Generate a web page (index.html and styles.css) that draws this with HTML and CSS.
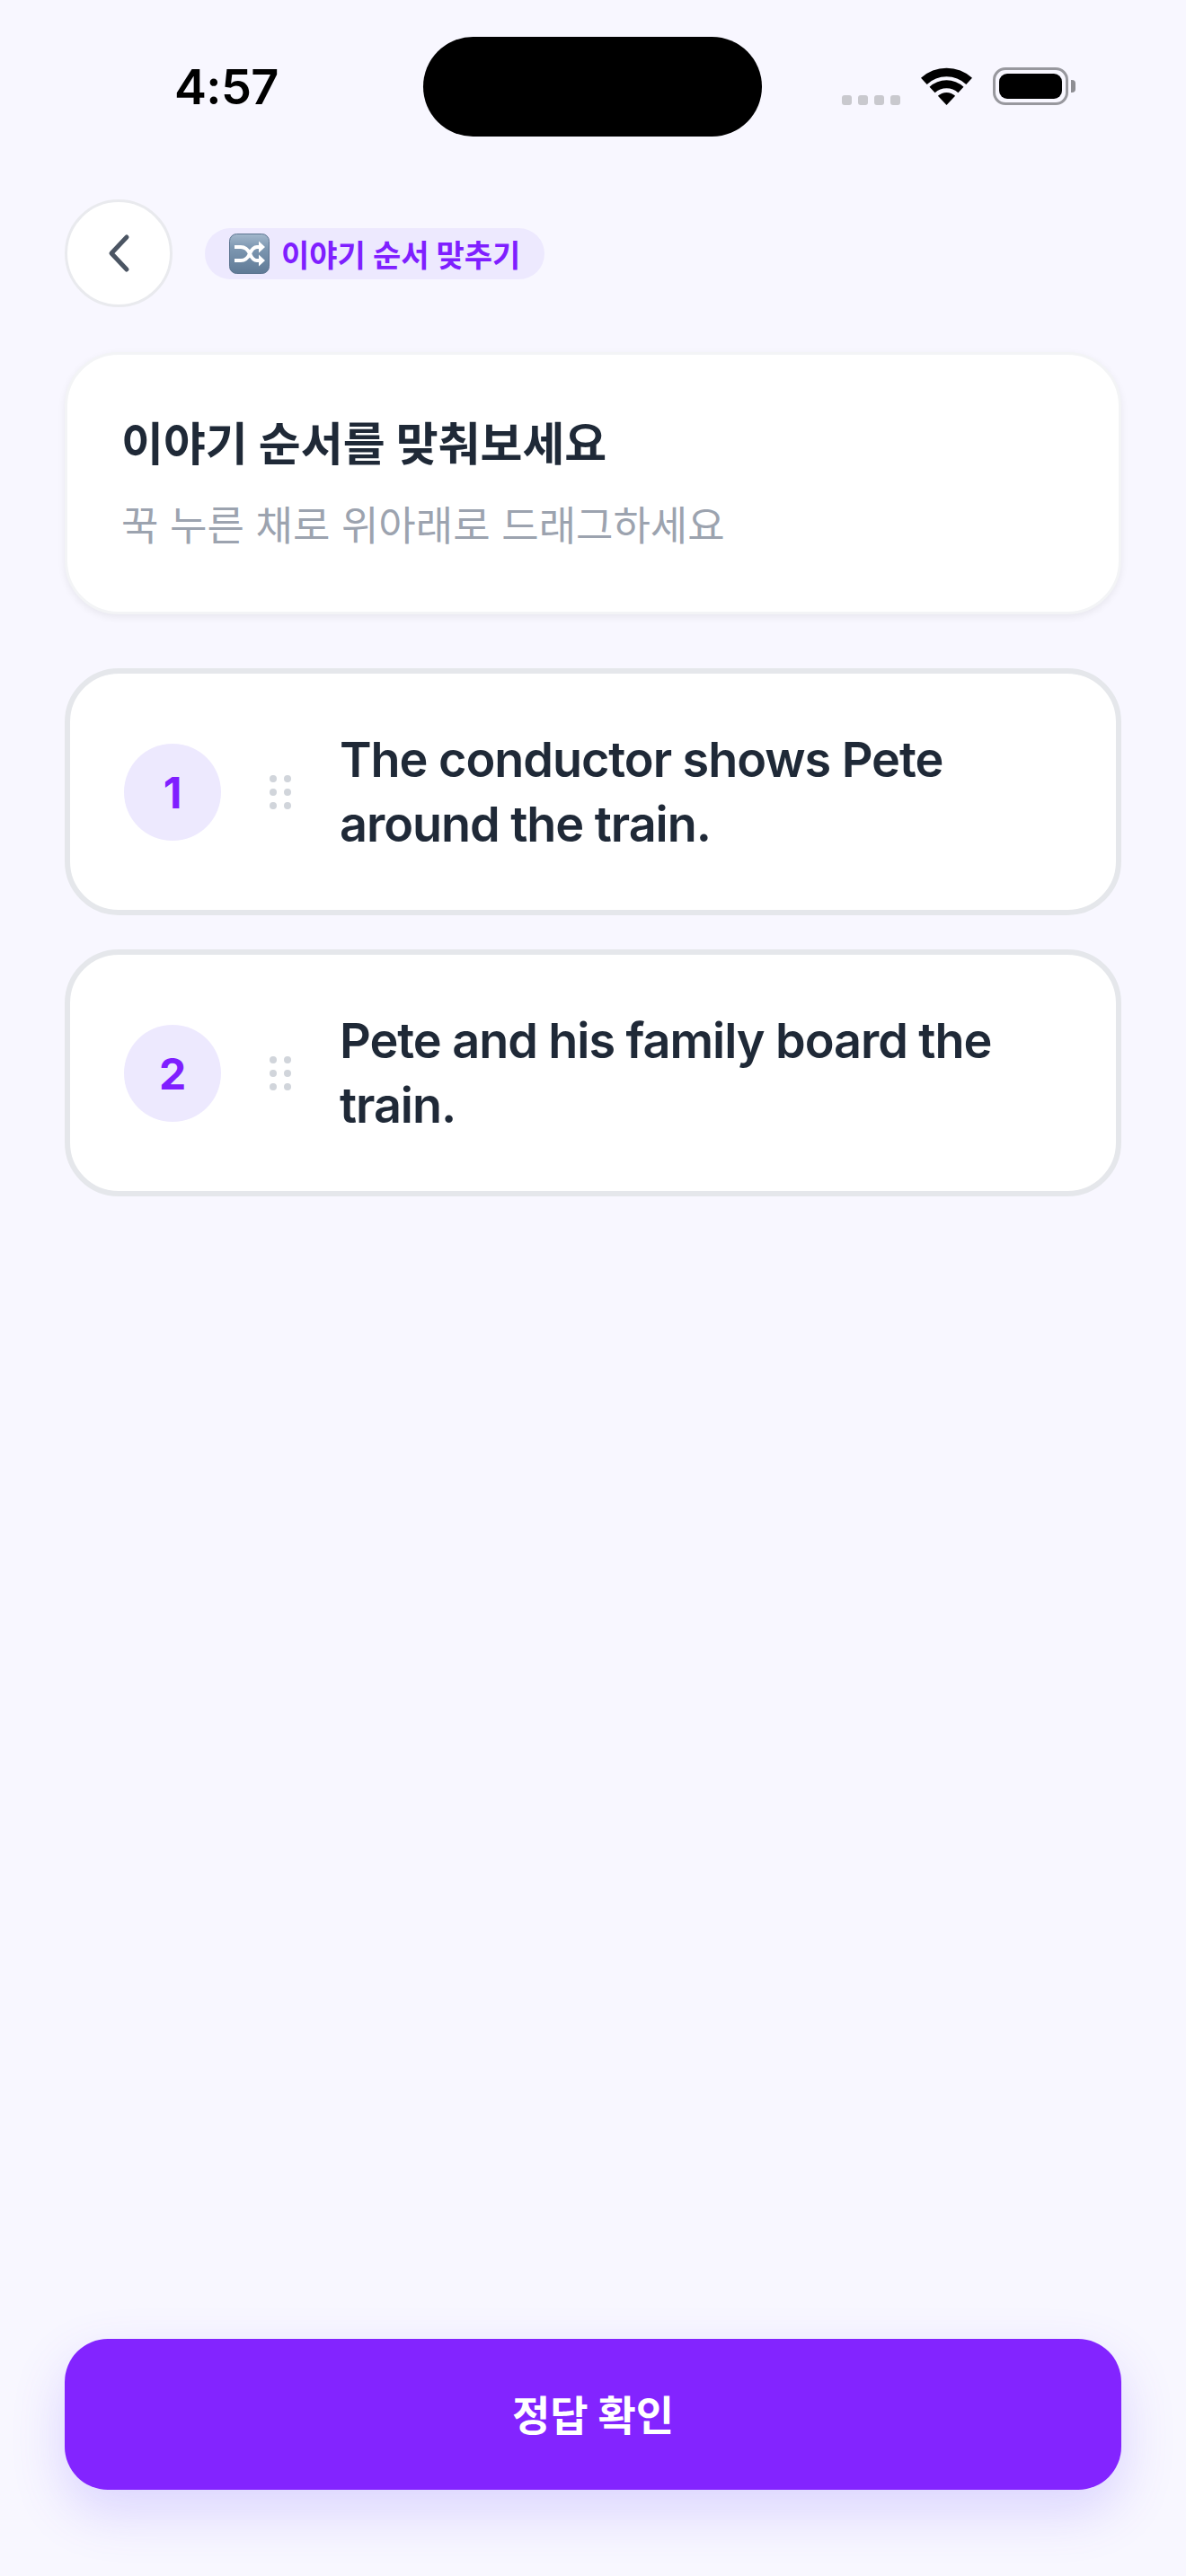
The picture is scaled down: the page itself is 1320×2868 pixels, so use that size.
FILE: index.html
```html
<!DOCTYPE html>
<html lang="ko">
<head>
<meta charset="UTF-8">
<title>이야기 순서 맞추기</title>
<link rel="stylesheet" href="styles.css">
</head>
<body>
<div class="page">
    <div class="status">
        <div class="time">4:57</div>
        <div class="island"></div>
        <div class="status-icons">
            <div class="signal"><i></i><i></i><i></i><i></i></div>
            <svg class="wifi" width="57" height="42" viewBox="0 0 57 42">
                <path d="M0 11.8A42 42 0 0 1 57 11.8L50.3 18.9A32 32 0 0 0 6.7 18.9Z"/>
                <path d="M9.5 21.8A28 28 0 0 1 47.5 21.8L41.4 28.3A19 19 0 0 0 15.6 28.3Z"/>
                <path d="M18.9 31.8A14 14 0 0 1 38.1 31.8L28.5 42Z"/>
            </svg>
            <div class="battery"><div class="battery-fill"></div></div>
            <div class="battery-cap"></div>
        </div>
    </div>

    <div class="top">
        <div class="back">
            <svg width="28" height="46" viewBox="0 0 28 46">
                <path d="M23 5L6 23L23 41" fill="none" stroke="#4b5563" stroke-width="5" stroke-linecap="round" stroke-linejoin="round"/>
            </svg>
        </div>
        <div class="pill">
            <svg class="shuffle" width="45" height="45" viewBox="0 0 45 45">
                <defs>
                    <linearGradient id="tile" x1="0" y1="0" x2="0" y2="1">
                        <stop offset="0" stop-color="#a3b8cc"/>
                        <stop offset="0.35" stop-color="#7d97b1"/>
                        <stop offset="1" stop-color="#5f7a96"/>
                    </linearGradient>
                </defs>
                <rect x="0.5" y="0.5" width="44" height="44" rx="8" fill="url(#tile)" stroke="#5d7590"/>
                <path d="M6 15H13C18 15 21 18 23 22.500C25 27 27 30 31 30H34M6 30H13C18 30 21 27 23 22.500C25 18 27 15 31 15H34" fill="none" stroke="#fff" stroke-width="4"/>
                <path d="M33 8.500L40 15L33 21.500ZM33 23.500L40 30L33 36.500Z" fill="#fff"/>
            </svg>
            <span>이야기 순서 맞추기</span>
        </div>
    </div>

    <div class="intro">
        <h1>이야기 순서를 맞춰보세요</h1>
        <p>꾹 누른 채로 위아래로 드래그하세요</p>
    </div>

    <div class="list">
        <div class="item">
            <div class="num">1</div>
            <div class="grip"><i></i><i></i><i></i><i></i><i></i><i></i></div>
            <div class="sentence">The conductor shows Pete around the train.</div>
        </div>
        <div class="item">
            <div class="num">2</div>
            <div class="grip"><i></i><i></i><i></i><i></i><i></i><i></i></div>
            <div class="sentence">Pete and his family board the train.</div>
        </div>
    </div>

    <div class="submit">정답 확인</div>
</div>
</body>
</html>
```

FILE: styles.css
```css
html, body {
    margin: 0;
    padding: 0;
}
body {
    background: #f8f7ff;
    font-family: Inter, "Noto Sans CJK KR", sans-serif;
    color: #1f2937;
}
.page {
    display: flex;
    flex-direction: column;
    box-sizing: border-box;
    height: 2868px;
    padding: 0 72px 96px;
}

/* status bar */
.status {
    display: flex;
    align-items: flex-start;
    height: 222px;
    margin: 0 -72px;
    padding-top: 41px;
    box-sizing: border-box;
}
.time {
    width: 277px;
    padding-left: 194px;
    margin-top: 29px;
    font-size: 54px;
    line-height: 54px;
    font-weight: 600;
    letter-spacing: -0.6px;
    color: #000;
}
.island {
    width: 377px;
    height: 111px;
    border-radius: 56px;
    background: #000;
}
.status-icons {
    display: flex;
    align-items: flex-start;
    margin-left: 89px;
    margin-top: 34px;
}
.signal {
    display: flex;
    gap: 7px;
    margin-top: 31px;
    margin-right: 23px;
}
.signal i {
    width: 11px;
    height: 11px;
    border-radius: 3px;
    background: #c9c9ce;
}
.wifi {
    display: block;
    margin-right: 23px;
}
.battery {
    box-sizing: border-box;
    width: 84px;
    height: 42px;
    padding: 4px;
    border: 3px solid #98989e;
    border-radius: 14px;
}
.battery-fill {
    height: 100%;
    border-radius: 9px;
    background: #000;
}
.battery-cap {
    width: 5px;
    height: 14px;
    margin: 14px 0 0 3px;
    border-radius: 0 4px 4px 0;
    background: #8e8e93;
}

/* top row */
.top {
    display: flex;
    align-items: center;
    height: 120px;
}
.back {
    display: flex;
    align-items: center;
    justify-content: center;
    box-sizing: border-box;
    width: 120px;
    height: 120px;
    border: 3px solid #e9eaee;
    border-radius: 50%;
    background: #fff;
}
.pill {
    display: flex;
    align-items: center;
    gap: 13px;
    box-sizing: border-box;
    height: 57px;
    margin-left: 36px;
    padding: 0 27px;
    border-radius: 29px;
    background: #ede9fe;
    color: #7f1fff;
    font-size: 34px;
    font-weight: 700;
}
.shuffle {
    flex: none;
}

/* instruction card */
.intro {
    box-sizing: border-box;
    height: 292px;
    margin-top: 50px;
    padding: 64px 60px 0;
    border: 3px solid #f3f4f6;
    border-radius: 60px;
    background: #fff;
    box-shadow: 0 3px 9px rgba(0, 0, 0, 0.07);
}
.intro h1 {
    margin: 0;
    font-size: 51px;
    line-height: 72px;
    font-weight: 700;
}
.intro p {
    margin: 22px 0 0;
    font-size: 45px;
    line-height: 66px;
    font-weight: 400;
    color: #9ca3af;
}

/* sentence cards */
.list {
    display: flex;
    flex-direction: column;
    gap: 38px;
    margin-top: 60px;
}
.item {
    display: flex;
    align-items: center;
    box-sizing: border-box;
    height: 275px;
    padding: 0 60px;
    border: 6px solid #e5e7eb;
    border-radius: 60px;
    background: #fff;
}
.num {
    display: flex;
    align-items: center;
    justify-content: center;
    flex: none;
    box-sizing: border-box;
    width: 108px;
    height: 108px;
    padding-top: 2px;
    border-radius: 50%;
    background: #ede9fe;
    color: #7f1fff;
    font-size: 48px;
    font-weight: 700;
}
.grip {
    display: grid;
    grid-template-columns: 8px 8px;
    gap: 7px 8px;
    flex: none;
    margin: 0 54px;
}
.grip i {
    width: 8px;
    height: 8px;
    border-radius: 50%;
    background: #d1d5db;
}
.sentence {
    font-size: 54px;
    line-height: 72px;
    font-weight: 600;
    letter-spacing: -1.05px;
}

/* bottom button */
.submit {
    display: flex;
    align-items: center;
    justify-content: center;
    box-sizing: border-box;
    height: 168px;
    margin-top: auto;
    padding-bottom: 4px;
    border-radius: 48px;
    background: #8324ff;
    color: #fff;
    font-size: 46px;
    font-weight: 700;
    box-shadow: 0 24px 60px rgba(100, 70, 255, 0.2);
}
```
